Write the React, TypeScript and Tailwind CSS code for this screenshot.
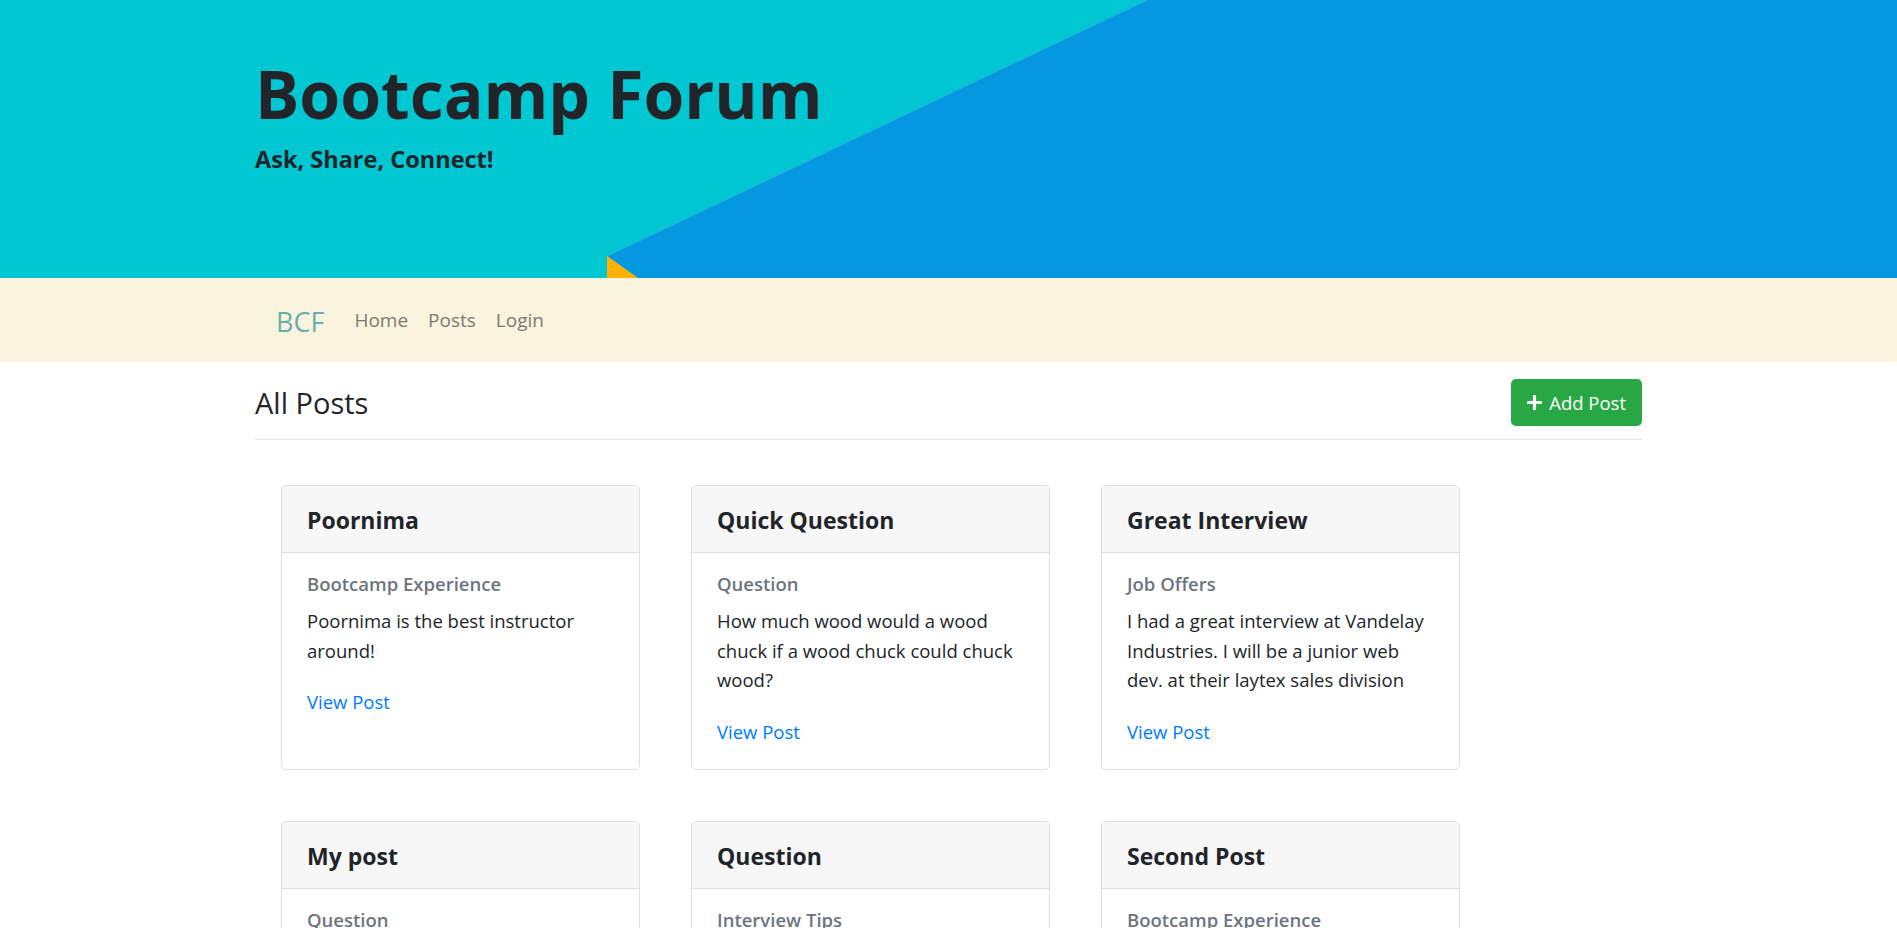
import React from "react";

type Post = { title: string; category: string; body: string };

const posts: Post[] = [
  { title: "Poornima", category: "Bootcamp Experience", body: "Poornima is the best instructor around!" },
  { title: "Quick Question", category: "Question", body: "How much wood would a wood chuck if a wood chuck could chuck wood?" },
  {
    title: "Great Interview",
    category: "Job Offers",
    body: "I had a great interview at Vandelay Industries. I will be a junior web dev. at their laytex sales division",
  },
  { title: "My post", category: "Question", body: "What is the best way to prepare for a technical interview?" },
  { title: "Question", category: "Interview Tips", body: "Practice whiteboarding every day and explain your thinking out loud." },
  { title: "Second Post", category: "Bootcamp Experience", body: "The projects were hard but I learned a lot from my cohort." },
];

function PlusIcon() {
  return (
    <svg viewBox="0 0 448 512" className="h-[17px] w-[15px]" fill="currentColor" aria-hidden="true">
      <path d="M416 208H272V64c0-17.67-14.33-32-32-32h-32c-17.670 0-32 14.33-32 32v144H32c-17.67 0-32 14.33-32 32v32c0 17.67 14.33 32 32 32h144v144c0 17.67 14.33 32 32 32h32c17.67 0 32-14.33 32-32V304h144c17.67 0 32-14.33 32-32v-32c0-17.67-14.33-32-32-32z" />
    </svg>
  );
}

function Card({ post }: { post: Post }) {
  return (
    <div className="flex w-[359px] flex-col rounded-[5px] border border-[#dfdfdf] bg-white">
      <div className="rounded-t-[4px] border-b border-[#dfdfdf] bg-[#f7f7f7] px-[25px] pt-[19px] pb-[17px]">
        <h3 className="text-[23px] font-bold leading-[30px] text-[#212529]">{post.title}</h3>
      </div>
      <div className="px-[25px] pt-[19px] pb-[23px]">
        <h4 className="mb-[10px] text-[18.5px] font-semibold leading-[24px] text-[#6c757d]">{post.category}</h4>
        <p className="mb-[22px] text-[18.5px] leading-[29.5px] text-[#212529]">{post.body}</p>
        <a href="#" className="block w-fit text-[18.5px] leading-[29.5px] text-[#007bff]">
          View Post
        </a>
      </div>
    </div>
  );
}

export default function App() {
  return (
    <div className="min-h-screen bg-white font-['Open_Sans',sans-serif] text-[#212529]">
      <header className="relative h-[278px] overflow-hidden">
        <svg
          className="absolute inset-0 h-full w-full"
          viewBox="0 0 1897 278"
          preserveAspectRatio="none"
          aria-hidden="true"
        >
          <rect x="0" y="0" width="1897" height="278" fill="#00c7d2" />
          <polygon points="1147,0 1897,0 1897,278 638,278 607,256" fill="#0498e0" />
          <line x1="607" y1="256" x2="1147" y2="0" stroke="#22b3dc" strokeWidth="1.2" />
          <polygon points="607,256 638,278 607,278" fill="#ffb000" />
        </svg>
        <div className="relative mx-auto w-[1387px] pt-[53px]">
          <h1 className="text-[66px] font-bold leading-[80px] text-[#212529]">Bootcamp Forum</h1>
          <p className="mt-[11px] text-[23.5px] font-bold leading-[30px] text-[#212529]">Ask, Share, Connect!</p>
        </div>
      </header>

      <nav className="h-[84px] bg-[#faf3de]">
        <div className="mx-auto flex h-full w-[1387px] items-center pl-[21px]">
          <a href="#" className="mr-[20px] pt-[3px] text-[27px] leading-[38px] text-[#66b0ab]">
            BCF
          </a>
          <a href="#" className="px-[10px] text-[19px] leading-[28px] text-[#7d796f]">
            Home
          </a>
          <a href="#" className="px-[10px] text-[19px] leading-[28px] text-[#7d796f]">
            Posts
          </a>
          <a href="#" className="px-[10px] text-[19px] leading-[28px] text-[#7d796f]">
            Login
          </a>
        </div>
      </nav>

      <main className="mx-auto w-[1387px] pb-[40px]">
        <div className="flex items-center justify-between pt-[17px]">
          <h2 className="text-[29px] font-medium leading-[36px] text-[#212529]">All Posts</h2>
          <button className="flex h-[47px] items-center gap-[7px] rounded-[5px] bg-[#28a745] px-[16px] text-[18.5px] leading-[28px] text-white">
            <PlusIcon />
            <span>Add Post</span>
          </button>
        </div>
        <hr className="mt-[13px] border-t border-[#e5e5e5]" />
        <div className="flex flex-wrap gap-[51px] pl-[26px] pt-[45px]">
          {posts.map((p) => (
            <Card key={p.title + p.category} post={p} />
          ))}
        </div>
      </main>
    </div>
  );
}
